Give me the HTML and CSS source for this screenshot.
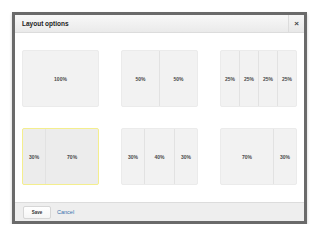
FILE: index.html
```html
<!DOCTYPE html>
<html lang="en">

<head>
  <meta charset="UTF-8">
  <title>Layout options</title>
  <link rel="stylesheet" href="styles.css">
</head>

<body>
  <div class="dialog">
    <div class="dialog-header">
      <span class="dialog-title">Layout options</span>
      <button class="close-button">&times;</button>
    </div>

    <div class="layouts">
      <div class="layout">
        <div class="col" style="flex: 100">100%</div>
      </div>
      <div class="layout">
        <div class="col" style="flex: 50">50%</div>
        <div class="col" style="flex: 50">50%</div>
      </div>
      <div class="layout">
        <div class="col" style="flex: 25">25%</div>
        <div class="col" style="flex: 25">25%</div>
        <div class="col" style="flex: 25">25%</div>
        <div class="col" style="flex: 25">25%</div>
      </div>

      <div class="layout selected">
        <div class="col" style="flex: 30">30%</div>
        <div class="col" style="flex: 70">70%</div>
      </div>
      <div class="layout">
        <div class="col" style="flex: 30">30%</div>
        <div class="col" style="flex: 40">40%</div>
        <div class="col" style="flex: 30">30%</div>
      </div>
      <div class="layout">
        <div class="col" style="flex: 70">70%</div>
        <div class="col" style="flex: 30">30%</div>
      </div>
    </div>

    <div class="dialog-footer">
      <button class="save-button">Save</button>
      <a class="cancel-link" href="#">Cancel</a>
    </div>
  </div>
</body>

</html>
```

FILE: styles.css
```css
body {
  font-family: "Liberation Sans", Arial, sans-serif;
  margin: 0;
  padding: 0;
  background-color: #fff;
}

.dialog {
  box-sizing: border-box;
  width: 295px;
  margin: 12px 0 0 12px;
  border: 3px solid #6a6a6a;
  background-color: #fff;
  box-shadow: 0 2px 3px rgba(0, 0, 0, 0.2);
}

.dialog-header {
  display: flex;
  align-items: center;
  height: 17px;
  background: linear-gradient(#f8f8f8, #eaeaea);
  border-bottom: 1px solid #dcdcdc;
}

.dialog-title {
  flex: 1;
  padding-left: 7px;
  font-size: 6.5px;
  font-weight: bold;
  color: #222;
}

.close-button {
  width: 16px;
  height: 17px;
  padding: 0;
  border: none;
  border-left: 1px solid #dcdcdc;
  background: linear-gradient(#f5f5f5, #e8e8e8);
  color: #444;
  font-family: "Liberation Sans", Arial, sans-serif;
  font-size: 8px;
  font-weight: bold;
  line-height: 17px;
}

.layouts {
  display: grid;
  grid-template-columns: repeat(3, 77px);
  justify-content: space-between;
  row-gap: 21px;
  padding: 17px 7px 17px 7px;
}

.layout {
  display: flex;
  height: 57px;
  box-sizing: border-box;
  border: 1px solid #ebebeb;
  border-radius: 2px;
  background-color: #f2f2f2;
}

.layout.selected {
  border-color: #f4ee8e;
  background-color: #ececec;
}

.col {
  display: flex;
  justify-content: center;
  align-items: center;
  font-size: 5px;
  font-weight: bold;
  color: #4a4a4a;
  border-left: 1px solid #e2e2e2;
}

.col:first-child {
  border-left: none;
}

.dialog-footer {
  display: flex;
  align-items: center;
  gap: 6px;
  height: 18px;
  padding-left: 8px;
  background-color: #eeeeee;
  border-top: 1px solid #dcdcdc;
}

.save-button {
  width: 28px;
  height: 13px;
  padding: 0;
  border: 1px solid #d6d6d6;
  border-radius: 2px;
  background: linear-gradient(#fff, #f5f5f5);
  font-family: "Liberation Sans", Arial, sans-serif;
  font-size: 4.5px;
  font-weight: bold;
  color: #333;
}

.cancel-link {
  font-size: 5.5px;
  color: #3a72ad;
  text-decoration: none;
}
```
